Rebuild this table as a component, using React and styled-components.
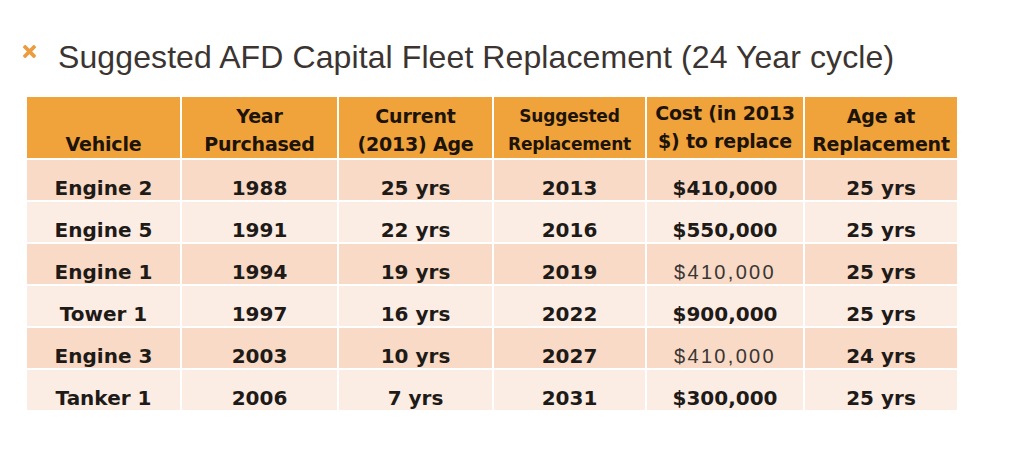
import React from 'react';
import styled, { createGlobalStyle } from 'styled-components';

const GlobalStyle = createGlobalStyle`
	html, body {
		margin: 0;
		padding: 0;
		background: #ffffff;
	}
	body {
		font-family: "Liberation Sans", Arial, sans-serif;
	}
`;

const Slide = styled.div`
	width: 1024px;
	height: 465px;
	box-sizing: border-box;
	padding: 39px 0 0 23px;
	overflow: hidden;
`;

const TitleRow = styled.div`
	display: flex;
	align-items: flex-start;
	gap: 22px;
	height: 36px;
`;

const Bullet = styled.svg`
	width: 13px;
	height: 13px;
	flex: none;
	margin-top: 6px;
`;

const Title = styled.h1`
	margin: 0;
	font-family: "Liberation Sans", Arial, sans-serif;
	font-weight: 400;
	font-size: 32px;
	letter-spacing: 0.1px;
	line-height: 36px;
	color: #3b3431;
	white-space: nowrap;
`;

const Grid = styled.div`
	display: grid;
	grid-template-columns: 153px 155px 153px 151px 156px 152px;
	grid-template-rows: 61px repeat(6, 40px);
	gap: 2px;
	margin: 22px 0 0 4px;
	background: #ffffff;
	width: max-content;
`;

const HeadCell = styled.div`
	display: flex;
	align-items: flex-end;
	justify-content: center;
	text-align: center;
	background: #f0a23b;
	color: #1c130a;
	font-family: "DejaVu Sans", Verdana, sans-serif;
	font-weight: 700;
	font-size: ${p => p.$small ? '17px' : '19px'};
	line-height: 28px;
	padding-bottom: ${p => p.$raise ? '3px' : '0'};
	white-space: nowrap;
	letter-spacing: -0.2px;
`;

const Cell = styled.div`
	display: flex;
	align-items: flex-end;
	justify-content: center;
	background: ${p => p.$dark ? '#f8dac6' : '#fcede4'};
	color: ${p => p.$light ? '#3a3634' : '#1e1a18'};
	font-family: ${p => p.$light ? '"Liberation Sans", Arial, sans-serif' : '"DejaVu Sans", Verdana, sans-serif'};
	font-weight: ${p => p.$light ? 400 : 700};
	font-size: 20px;
	letter-spacing: ${p => p.$light ? '2.3px' : '0'};
	line-height: 24px;
	white-space: nowrap;
`;

const headers = [
	{ lines: ['Vehicle'] },
	{ lines: ['Year', 'Purchased'] },
	{ lines: ['Current', '(2013) Age'] },
	{ lines: ['Suggested', 'Replacement'], small: true },
	{ lines: ['Cost (in 2013', '$) to replace'], raise: true },
	{ lines: ['Age at', 'Replacement'] },
];

const rows = [
	{ vehicle: 'Engine 2', year: '1988', age: '25 yrs', repl: '2013', cost: '$410,000', at: '25 yrs' },
	{ vehicle: 'Engine 5', year: '1991', age: '22 yrs', repl: '2016', cost: '$550,000', at: '25 yrs' },
	{ vehicle: 'Engine 1', year: '1994', age: '19 yrs', repl: '2019', cost: '$410,000', at: '25 yrs', lightCost: true },
	{ vehicle: 'Tower 1', year: '1997', age: '16 yrs', repl: '2022', cost: '$900,000', at: '25 yrs' },
	{ vehicle: 'Engine 3', year: '2003', age: '10 yrs', repl: '2027', cost: '$410,000', at: '24 yrs', lightCost: true },
	{ vehicle: 'Tanker 1', year: '2006', age: '7 yrs', repl: '2031', cost: '$300,000', at: '25 yrs' },
];

export default function App() {
	return (
		<>
			<GlobalStyle />
			<Slide>
				<TitleRow>
					<Bullet viewBox="0 0 12 12">
						<path d="M2 2 L10 10 M10 2 L2 10" stroke="#ec9b3e" strokeWidth="3.4" strokeLinecap="square" />
					</Bullet>
					<Title>Suggested AFD Capital Fleet Replacement (24 Year cycle)</Title>
				</TitleRow>
				<Grid>
					{headers.map((h, i) => (
						<HeadCell key={i} $small={h.small} $raise={h.raise}>
							<div>
								{h.lines.map((l, j) => <div key={j}>{l}</div>)}
							</div>
						</HeadCell>
					))}
					{rows.map((r, i) => {
						const dark = i % 2 === 0;
						return (
							<React.Fragment key={i}>
								<Cell $dark={dark}>{r.vehicle}</Cell>
								<Cell $dark={dark}>{r.year}</Cell>
								<Cell $dark={dark}>{r.age}</Cell>
								<Cell $dark={dark}>{r.repl}</Cell>
								<Cell $dark={dark} $light={r.lightCost}>{r.cost}</Cell>
								<Cell $dark={dark}>{r.at}</Cell>
							</React.Fragment>
						);
					})}
				</Grid>
			</Slide>
		</>
	);
}
